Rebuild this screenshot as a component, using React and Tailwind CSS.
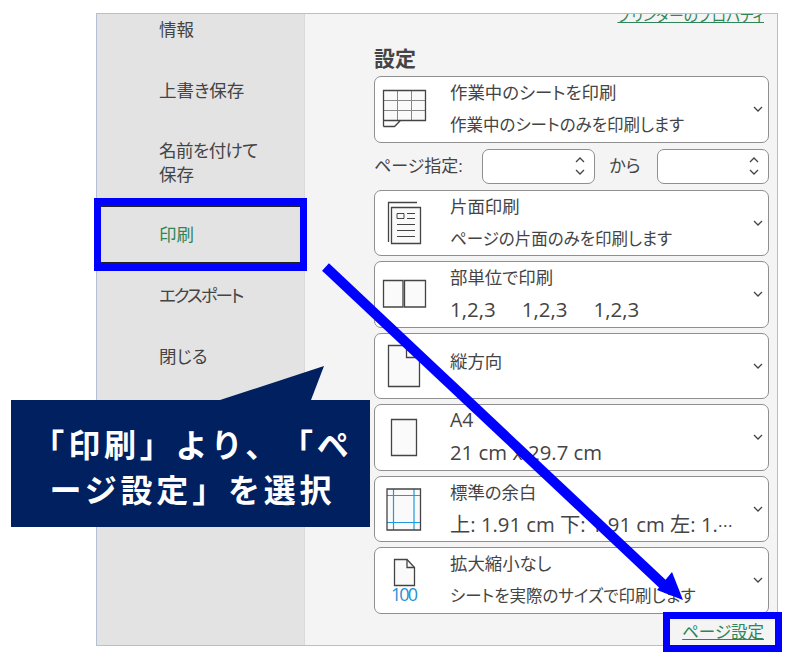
const FONT = "font-['Open_Sans','Noto_Sans_CJK_JP',sans-serif]";

function Chevron() {
  return (
    <svg width="10" height="6" viewBox="0 0 10 6" className="shrink-0 mr-[5px]" fill="none" stroke="#444" strokeWidth="1.3">
      <path d="M1 1l4 4 4-4" />
    </svg>
  );
}

function Spin() {
  return (
    <div className="flex flex-col items-center gap-[6px] mr-[9px]">
      <svg width="10" height="6" viewBox="0 0 10 6" fill="none" stroke="#444" strokeWidth="1.3"><path d="M1 5l4-4 4 4" /></svg>
      <svg width="10" height="6" viewBox="0 0 10 6" fill="none" stroke="#444" strokeWidth="1.3"><path d="M1 1l4 4 4-4" /></svg>
    </div>
  );
}

const D = "#444";
const icons = {
  grid: (
    <g fill="none">
      <path d="M9.5 14.5H51.5V44.5H26.5L20.5 50.5H9.5Z" fill="#fafafa" />
      <path d="M23.5 14.5V44.5M37.5 14.5V44.5M9.5 24.5H51.5M9.5 34.5H51.5" stroke="#888" />
      <path d="M9.5 50.5V14.5H51.5V44.5H26.5L20.5 50.5H9.5M9.5 44.5H26.5" stroke={D} strokeWidth="1.3" />
    </g>
  ),
  single: (
    <g fill="none" stroke={D} strokeWidth="1.3">
      <path d="M14.5 52V12.5H43" />
      <path d="M17.5 17.5H46.5V53.5H17.5Z" fill="#fafafa" />
      <path d="M23 23.5H30V28.5H23Z" strokeWidth="1" />
      <path d="M33 23.5H41M33 28.5H41M23 34.5H41M23 40.5H41M23 46.5H41" strokeWidth="1" />
    </g>
  ),
  collate: (
    <g fill="#fafafa" stroke={D} strokeWidth="1.3">
      <path d="M9.5 19.5H29V46H9.5Z" />
      <path d="M30.5 19.5H51.5V46H30.5Z" />
    </g>
  ),
  portrait: (
    <g fill="#fafafa" stroke={D} strokeWidth="1.3">
      <path d="M14.5 12.5H32.5L45.5 24.5V53.5H14.5Z" />
      <path d="M32.5 12.5V24.5H45.5" fill="none" />
    </g>
  ),
  a4: <path d="M17.5 15.5H42.5V51.5H17.5Z" fill="#fafafa" stroke={D} strokeWidth="1.3" />,
  margin: (
    <g fill="none">
      <path d="M13 13H46.5V54H13Z" fill="#fafafa" />
      <path d="M19.5 13V54M40 13V54M13 19.5H46.5M13 46.5H46.5" stroke="#1e9be0" strokeWidth="1.2" />
      <path d="M13 13H46.5V54H13Z" stroke={D} strokeWidth="1.3" />
    </g>
  ),
  scale: (
    <g>
      <path d="M20.5 12.5H33L40.5 20.5V38.5H20.5Z" fill="#fafafa" stroke={D} strokeWidth="1.3" />
      <path d="M33 12.5V20.5H40.5" fill="none" stroke={D} strokeWidth="1.3" />
      <text x="29.5" y="54" textAnchor="middle" fontSize="18" letterSpacing="-2" fill="#2b8fd0" fontFamily="'Open Sans',sans-serif">100</text>
    </g>
  ),
};

function Card({ icon, title, sub, titleClass = "text-[17.4px]", subClass = "text-[16.5px]" }) {
  return (
    <div className="h-[66.5px] rounded-[7px] border border-[#8f8f8f] bg-white flex items-center">
      <svg width="76" height="66" viewBox="0 0 76 66" className="shrink-0 -ml-px">
        {icons[icon]}
      </svg>
      {sub ? (
        <div className="flex-1 min-w-0 h-full flex flex-col pt-[1px]">
          <div className={`h-[28px] leading-[28px] ${titleClass}`}>{title}</div>
          <div className={`h-[31px] leading-[31px] mt-[3px] ${subClass}`}>{sub}</div>
        </div>
      ) : (
        <div className={`flex-1 min-w-0 pb-[9px] leading-[28px] ${titleClass}`}>{title}</div>
      )}
      <Chevron />
    </div>
  );
}

function NavItem({ h = "h-[61px]", extra = "", children, active }) {
  return (
    <div className={`${h} ${extra} flex items-center pl-[62px] text-[17.5px] leading-[24px] ${active ? "text-[#2f8558] border-y-2 border-[#222]" : ""}`}>
      <div>{children}</div>
    </div>
  );
}

export default function App() {
  return (
    <div className={`relative w-[791px] h-[656px] bg-white overflow-hidden text-[#444] ${FONT}`}>
      <div className="pt-[13px] pl-[96px]">
        <div className="w-[682px] h-[633px] border border-[#b4bfd6] flex overflow-hidden [font-feature-settings:'palt']">
          <nav className="w-[208px] shrink-0 bg-[#e3e3e3] border-r border-[#dadada] flex flex-col -mt-[16px]">
            <NavItem>情報</NavItem>
            <NavItem>上書き保存</NavItem>
            <NavItem h="h-[85px]" extra="pb-[1px]"><span className="tracking-[-0.5px]">名前を付けて</span><br />保存</NavItem>
            <NavItem h="h-[59px]" extra="pb-[1px]" active>印刷</NavItem>
            <NavItem h="h-[62px]"><span className="tracking-[-2px]">エクスポート</span></NavItem>
            <NavItem extra="pb-[2px]">閉じる</NavItem>
            <div className="flex-1" />
          </nav>
          <main className="flex-1 bg-[#f4f4f4] pl-[69px] pr-[8px] flex flex-col">
            <div className="h-[20px] -mt-[9px] shrink-0 flex justify-end pr-[5px]">
              <span className="text-[14.8px] leading-[20px] text-[#2f8558] underline whitespace-nowrap">プリンターのプロパティ</span>
            </div>
            <div className="mt-[21px] h-[24px] leading-[24px] text-[21px] font-bold shrink-0">設定</div>
            <div className="mt-[6px] flex flex-col gap-[5px]">
              <Card icon="grid" title="作業中のシートを印刷" sub="作業中のシートのみを印刷します" />
              <div className="h-[35px] flex items-center my-px text-[17px]">
                <span className="w-[108px] shrink-0 whitespace-nowrap">ページ指定:</span>
                <div className="w-[113px] h-[35px] rounded-[7px] border border-[#8f8f8f] bg-white flex items-center justify-end"><Spin /></div>
                <span className="w-[62px] pr-[2px] text-center shrink-0">から</span>
                <div className="w-[112px] h-[35px] rounded-[7px] border border-[#8f8f8f] bg-white flex items-center justify-end"><Spin /></div>
              </div>
              <Card icon="single" title="片面印刷" sub="ページの片面のみを印刷します" />
              <Card icon="collate" title="部単位で印刷" subClass="text-[20.5px]" sub={<div className="flex gap-[26px]"><span>1,2,3</span><span>1,2,3</span><span>1,2,3</span></div>} />
              <Card icon="portrait" title="縦方向" />
              <Card icon="a4" title="A4" titleClass="text-[19.5px]" subClass="text-[20.3px]" sub="21 cm x 29.7 cm" />
              <Card icon="margin" title="標準の余白" subClass="text-[20.3px]" sub={<div className="whitespace-nowrap">上: 1.91 cm 下: 1.91 cm 左: 1.<span className="text-[15px] font-['Noto_Sans_CJK_JP',sans-serif]">…</span></div>} />
              <Card icon="scale" title="拡大縮小なし" sub="シートを実際のサイズで印刷します" />
            </div>
            <div className="mt-auto mb-[2px] flex justify-end pr-[5px]">
              <span className="text-[16.5px] leading-[22px] text-[#2f8558] underline whitespace-nowrap">ページ設定</span>
            </div>
          </main>
        </div>
      </div>

      <div className="absolute left-[94px] top-[198px] w-[213px] h-[73px] border-[7px] border-[#0000ff]" />
      <div className="absolute left-[663px] top-[612px] w-[119px] h-[40px] border-[7px] border-[#0000ff]" />

      <svg className="absolute left-0 top-0 pointer-events-none" width="791" height="656" viewBox="0 0 791 656">
        <path d="M220 400L324 366L311 400Z" fill="#002060" />
        <path d="M325.5 267L668 589" stroke="#0000ff" strokeWidth="10" fill="none" />
        <path d="M683 600L657 590L672 572Z" fill="#0000ff" />
      </svg>

      <div className="absolute left-[11px] top-[400px] w-[359px] h-[127px] pt-[7px] pl-[4px] bg-[#002060] flex flex-col justify-center items-center text-white text-[32px] leading-[45px] font-bold tracking-[3.8px] whitespace-nowrap [text-spacing-trim:space-all]">
        <div>「印刷」より、「ペ</div>
        <div>ージ設定」を選択</div>
      </div>
    </div>
  );
}
